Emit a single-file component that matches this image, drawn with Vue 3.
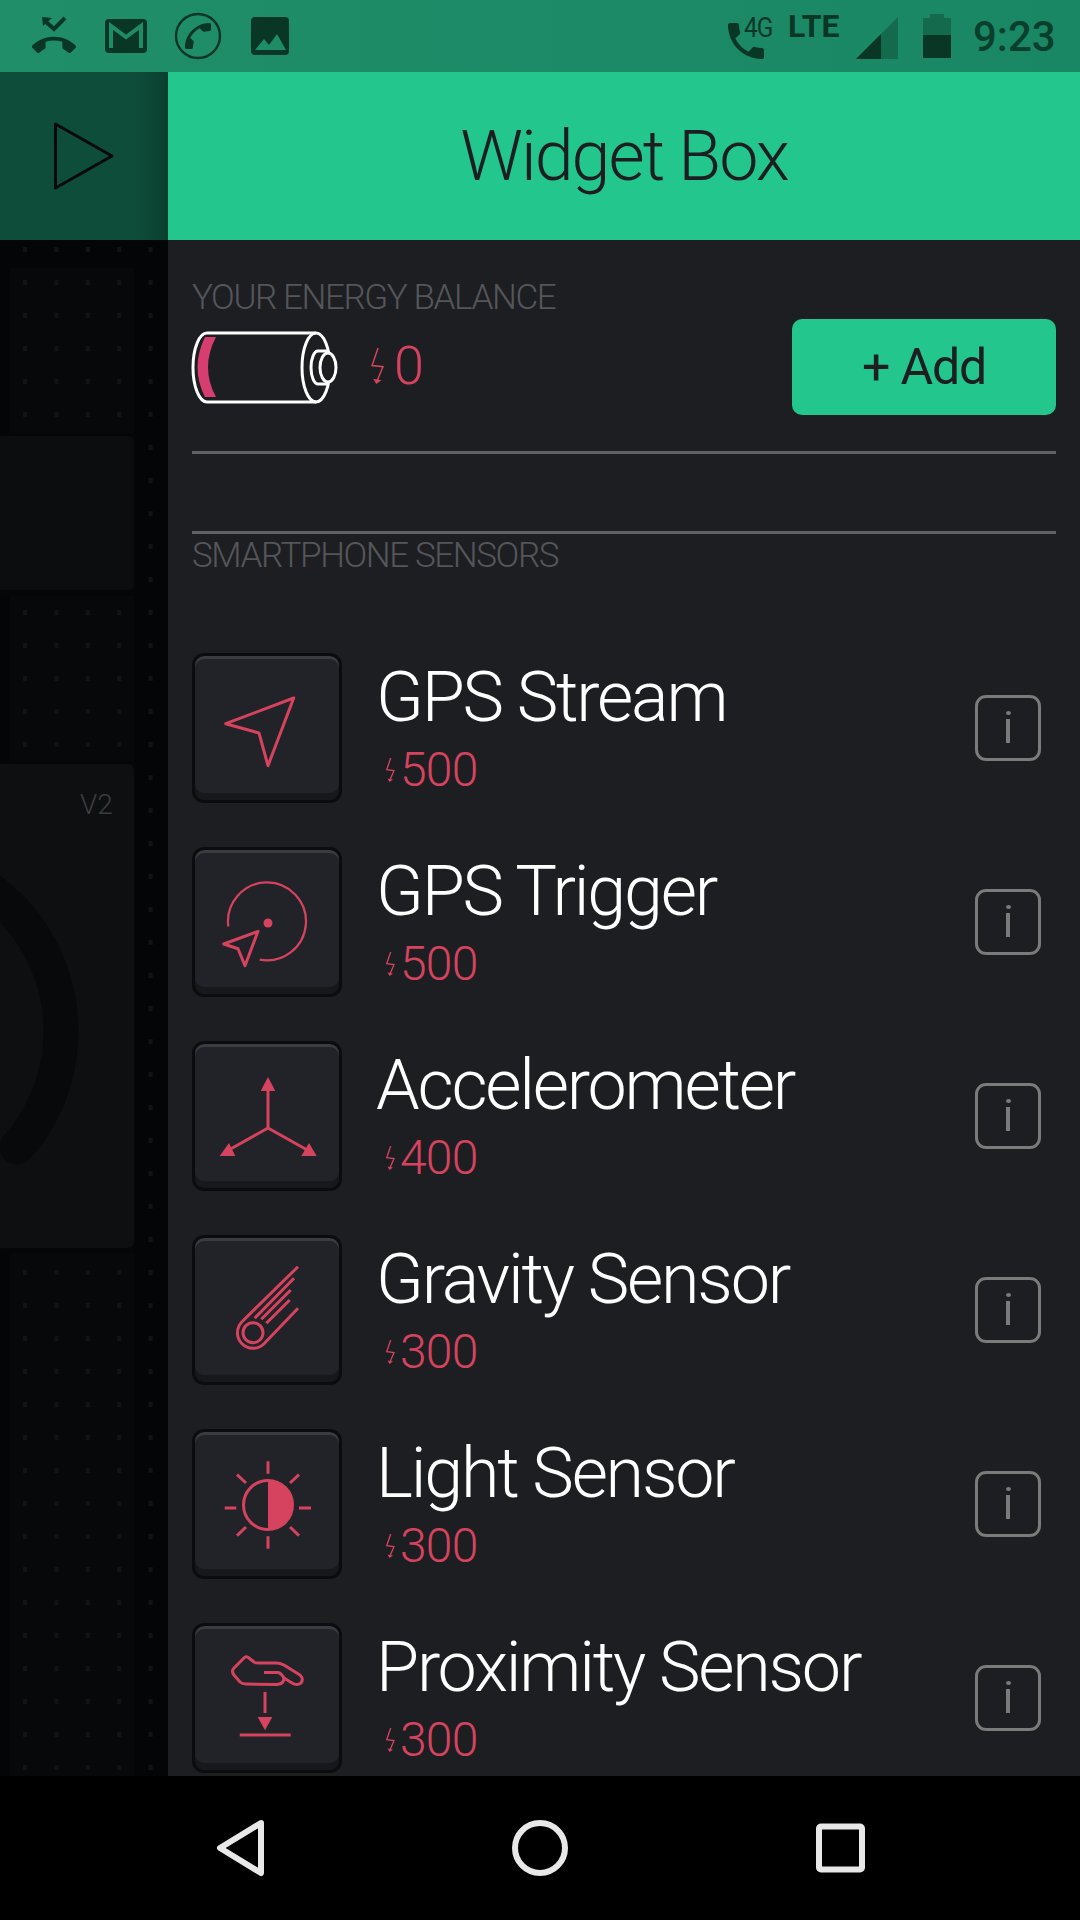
<template>
  <div class="screen">
    <div class="status-bar">
      <div class="status-left">
        <svg class="st-call-end" width="44" height="40" viewBox="0 0 44 40">
          <path d="M10 3l10 1-9 8z" />
          <path d="M14 8l8 7 11-11" fill="none" stroke="#0a3626" stroke-width="4" />
          <g transform="translate(0,10) scale(1.83)">
            <path d="M12 9c-1.6 0-3.15.25-4.6.72v3.1c0 .39-.23.74-.56.9-.98.49-1.87 1.12-2.66 1.85-.18.18-.43.28-.7.28-.28 0-.53-.11-.71-.29L.29 13.08c-.18-.17-.29-.42-.29-.7 0-.28.11-.53.29-.71C3.34 8.78 7.46 7 12 7s8.66 1.78 11.71 4.67c.18.18.29.43.29.71 0 .28-.11.53-.29.71l-2.48 2.48c-.18.18-.43.29-.71.29-.27 0-.52-.11-.7-.28-.79-.74-1.69-1.36-2.67-1.85-.33-.16-.56-.5-.56-.9v-3.1C15.15 9.25 13.6 9 12 9z" />
          </g>
        </svg>
        <svg class="st-gmail" width="42" height="34" viewBox="0 0 42 34">
          <rect width="42" height="34" rx="4" />
          <path d="M6 29V7l15 11L36 7v22" fill="none" stroke="#1e8c67" stroke-width="4" />
        </svg>
        <svg class="st-circle" width="48" height="48" viewBox="0 0 48 48">
          <circle cx="24" cy="24" r="22" fill="none" stroke="#0a3626" stroke-width="2.4" />
          <g transform="translate(24,24) rotate(90) scale(1.45) translate(-12,-12)">
            <path :d="callPath" />
          </g>
        </svg>
        <svg class="st-image" width="38" height="38" viewBox="0 0 38 38">
          <rect width="38" height="38" rx="4" />
          <path d="M4 33l9-11 5 6 8-11 9 16z" fill="#1e8c67" />
        </svg>
      </div>
      <div class="status-right">
        <div class="st-phone">
          <svg width="48" height="48" viewBox="0 0 24 24"><path :d="callPath" /></svg>
          <span class="st-4g">4G</span>
        </div>
        <span class="st-lte">LTE</span>
        <svg class="st-signal" width="42" height="42" viewBox="0 0 42 42">
          <path d="M42 0v42H0z" fill="#146a4c" />
          <path d="M25 17v25H0z" fill="#0a3626" />
        </svg>
        <svg class="st-battery" width="28" height="44" viewBox="0 0 28 44">
          <path d="M7 0h14v4h7v17H0V4h7z" fill="#146a4c" />
          <rect y="21" width="28" height="23" fill="#0a3626" />
        </svg>
        <span class="st-time">9:23</span>
      </div>
    </div>

    <div class="top-row">
      <div class="play-box">
        <svg width="64" height="72" viewBox="0 0 64 72">
          <path d="M3.500 4L60 36 3.500 68z" fill="none" stroke="#070a09" stroke-width="3" stroke-linejoin="round" />
        </svg>
      </div>
      <div class="title-box">Widget Box</div>
    </div>

    <div class="body-row">
      <svg class="canvas" width="168" height="1536" viewBox="0 0 168 1536">
        <defs>
          <pattern id="dots" x="23" y="40" width="31.400" height="33" patternUnits="userSpaceOnUse">
            <rect width="4" height="5" fill="#121316" />
          </pattern>
        </defs>
        <rect width="168" height="1536" fill="#040507" />
        <rect x="10" y="28" width="124" height="1508" fill="#07080a" />
        <rect width="168" height="1536" fill="url(#dots)" />
        <rect x="-10" y="193" width="146" height="163" rx="6" fill="#050608" />
        <rect x="-10" y="196" width="144" height="154" rx="6" fill="#0c0d0f" />
        <rect x="-10" y="521" width="146" height="493" rx="6" fill="#050608" />
        <rect x="-10" y="524" width="144" height="484" rx="6" fill="#0e0f11" />
        <path d="M-115 616A175 175 0 0 1 17 907" fill="none" stroke="#08090b" stroke-width="35" stroke-linecap="round" />
        <text class="v2" x="80" y="574">V2</text>
      </svg>

      <div class="drawer">
        <div class="label balance-label">YOUR ENERGY BALANCE</div>
        <div class="balance-row">
          <svg class="battery" width="150" height="76" viewBox="0 0 150 76">
            <path d="M15 8H26Q10 38.500 26 68H15Q0 38.500 15 8z" fill="#d63e70" />
            <path d="M126 4H17A14 34.500 0 0 0 17 73H126" fill="none" stroke="#fff" stroke-width="3" />
            <ellipse cx="126" cy="38.500" rx="14" ry="34.500" fill="none" stroke="#fff" stroke-width="3" />
            <path d="M138 22H128A7 16.500 0 0 0 128 55H138" fill="none" stroke="#fff" stroke-width="3" />
            <ellipse cx="138" cy="38.500" rx="8" ry="14.500" fill="#1d1e22" stroke="#fff" stroke-width="3" />
          </svg>
          <svg class="bolt-big" width="15" height="36" viewBox="0 0 10 24">
            <path d="M4.700 0L.7 11.700 8 12.500 4 22" fill="none" stroke="#d5435f" stroke-width="1" />
            <path d="M1.500 20.500L7 21.500 3.500 24z" fill="#d5435f" />
          </svg>
          <span class="balance-value">0</span>
          <button class="add-btn">+ Add</button>
        </div>
        <div class="divider first"></div>
        <div class="divider second"></div>
        <div class="label sensors-label">SMARTPHONE SENSORS</div>

        <div class="widgets">
          <div v-for="w in widgets" :key="w.name" class="widget">
            <div class="tile">
              <svg width="150" height="150" viewBox="0 0 150 150">
                <g v-if="w.icon === 'stream'" class="ico">
                  <path d="M101.700 45L33.700 70.700 67 80 76 112.700z" />
                </g>
                <g v-else-if="w.icon === 'trigger'" class="ico">
                  <path class="thin" d="M36.300 79.300A39 39 0 1 1 67.700 112.700" />
                  <circle class="solid" cx="76" cy="76" r="4.500" />
                  <path d="M66 84.300L31.700 97 46 101.700 53 118.700z" />
                </g>
                <g v-else-if="w.icon === 'accel'" class="ico">
                  <path d="M76 87V49M76 87L35 110M76 87L117 110" />
                  <path class="solid" d="M76 36L68.700 50H83.300zM37 102L27.700 115H43.300zM117 102L109.300 115H124.700z" />
                </g>
                <g v-else-if="w.icon === 'gravity'" class="ico">
                  <path d="M106 31.700L50 86.700A15.500 15.500 0 1 0 72 108.700L106 73.300" />
                  <circle cx="61" cy="97.700" r="10" />
                  <path d="M102 43.300L62.700 83.300M98.700 55L69.300 84.300M97.700 65L74.300 88.300" />
                </g>
                <g v-else-if="w.icon === 'light'" class="ico">
                  <circle cx="76" cy="76" r="24.500" />
                  <path class="solid" d="M76 51a25 25 0 0 1 0 50z" />
                  <path d="M76 32.300V44.700M76 107.300V119.700M32.700 79H44.300M107 79H119M45 45.700L54 54M107 45.700L98 54M45 106.700L54 98M107 106.700L98 98" />
                </g>
                <g v-else-if="w.icon === 'proximity'" class="ico">
                  <path d="M53 34Q55 33 57 35L62 39Q63 40 66 40L84 40Q88 40 92 42L108 52Q112 56 109 60Q105 63 100 60L92 55Q92 61 85 61.500L54 61Q50 61 48 59L42 52Q39 48 42 45z" />
                  <path d="M72 49.500L86 49.500Q89 50 92 55" />
                  <path d="M73 69V90M47.700 112H98.700" />
                  <path class="solid" d="M65.700 94H80.300L73 107.300z" />
                </g>
              </svg>
            </div>
            <div class="widget-text">
              <div class="widget-name">{{ w.name }}</div>
              <div class="widget-cost">
                <svg width="10" height="24" viewBox="0 0 10 24">
                  <path d="M4.700 0L.7 11.700 8 12.500 4 22" fill="none" stroke="#d5435f" stroke-width="1.300" />
                  <path d="M1.500 20.500L7 21.500 3.500 24z" fill="#d5435f" />
                </svg>
                <span>{{ w.cost }}</span>
              </div>
            </div>
            <div class="info-btn">
              <span class="info-dot"></span>
              <span class="info-stem"></span>
            </div>
          </div>
        </div>
      </div>
    </div>

    <div class="nav-bar">
      <svg width="60" height="68" viewBox="0 0 60 68">
        <path d="M51 9L10 34 51 59z" />
      </svg>
      <svg width="60" height="60" viewBox="0 0 60 60">
        <circle cx="30" cy="30" r="25" />
      </svg>
      <svg class="nav-square" width="52" height="52" viewBox="0 0 52 52">
        <rect x="3" y="4.500" width="43" height="43" rx="2" />
      </svg>
    </div>
  </div>
</template>

<script setup>
const callPath =
  'M6.62 10.79c1.44 2.83 3.76 5.14 6.59 6.59l2.2-2.2c.27-.27.67-.36 1.02-.24 1.12.37 2.33.57 3.57.57.55 0 1 .45 1 1V20c0 .55-.45 1-1 1-9.39 0-17-7.61-17-17 0-.55.45-1 1-1h3.5c.55 0 1 .45 1 1 0 1.25.2 2.45.57 3.57.11.35.03.74-.25 1.02l-2.2 2.2z'

const widgets = [
  { name: 'GPS Stream', cost: 500, icon: 'stream' },
  { name: 'GPS Trigger', cost: 500, icon: 'trigger' },
  { name: 'Accelerometer', cost: 400, icon: 'accel' },
  { name: 'Gravity Sensor', cost: 300, icon: 'gravity' },
  { name: 'Light Sensor', cost: 300, icon: 'light' },
  { name: 'Proximity Sensor', cost: 300, icon: 'proximity' }
]
</script>

<style>
html,
body {
  margin: 0;
  background: #000;
}
</style>

<style scoped>
.screen {
  width: 1080px;
  height: 1920px;
  display: flex;
  flex-direction: column;
  overflow: hidden;
  font-family: Roboto, "Liberation Sans", sans-serif;
  font-weight: 300;
}

.status-bar {
  height: 72px;
  flex: none;
  display: flex;
  justify-content: space-between;
  background: linear-gradient(90deg, #1f8e69, #198763);
}

.status-bar svg {
  fill: #0a3626;
  display: block;
}

.status-left {
  position: relative;
  width: 300px;
}

.status-left svg {
  position: absolute;
}

.st-call-end { left: 32px; top: 14px; }
.st-gmail { left: 105px; top: 19px; }
.st-circle { left: 174px; top: 12px; }
.st-image { left: 251px; top: 17px; }

.status-right {
  position: relative;
  width: 400px;
}

.status-right > * {
  position: absolute;
}

.st-phone { left: 42px; top: 17px; width: 60px; height: 48px; }
.st-4g {
  position: absolute;
  left: 22px;
  top: -4px;
  font-size: 27px;
  line-height: 30px;
  color: #0a3626;
  font-weight: 400;
  letter-spacing: -1px;
  transform: scaleX(0.9);
  transform-origin: left;
}
.st-lte {
  left: 108px;
  top: 10px;
  font-size: 32px;
  line-height: 32px;
  font-weight: 700;
  color: #0a3626;
}
.st-signal { left: 176px; top: 17px; }
.st-battery { left: 243px; top: 14px; }
.st-time {
  left: 293px;
  top: 13px;
  font-size: 42px;
  line-height: 48px;
  font-weight: 500;
  color: #0a3f2d;
}

.top-row {
  height: 168px;
  flex: none;
  display: flex;
}

.play-box {
  width: 168px;
  flex: none;
  background: linear-gradient(90deg, #0d4d39, #0d4d39 80%, #0b3f2f);
  display: flex;
  align-items: center;
  padding: 0 0 0 52px;
  box-sizing: border-box;
}

.title-box {
  flex: 1;
  background: #23c78e;
  color: #1d1e22;
  font-size: 70px;
  line-height: 168px;
  letter-spacing: -2px;
  text-align: center;
}

.body-row {
  flex: 1;
  display: flex;
  min-height: 0;
}

.canvas {
  flex: none;
  display: block;
}

.v2 {
  font-family: Roboto, sans-serif;
  font-size: 28px;
  fill: #3c3d40;
}

.drawer {
  flex: 1;
  background: #1d1e22;
  padding: 38px 24px 0;
  overflow: hidden;
  min-width: 0;
}

.label {
  font-size: 35px;
  line-height: 40px;
  letter-spacing: -1.400px;
  color: #55565a;
}

.balance-row {
  position: relative;
  display: flex;
  align-items: center;
  height: 96px;
  margin-top: 1px;
}

.battery {
  margin-left: -2px;
  margin-top: -1px;
}

.bolt-big {
  margin-left: 31px;
  margin-top: -3px;
}

.balance-value {
  margin-left: 8px;
  margin-top: -3px;
  font-size: 54px;
  line-height: 60px;
  color: #d5435f;
}

.add-btn {
  margin-left: auto;
  width: 264px;
  height: 96px;
  border: none;
  border-radius: 10px;
  background: #23c78e;
  color: #1d1e22;
  font-family: inherit;
  font-weight: 400;
  font-size: 50px;
  letter-spacing: -1.200px;
  padding: 0;
}

.divider {
  height: 3px;
  background: #5f6064;
}

.divider.first {
  margin-top: 36px;
}

.divider.second {
  margin-top: 77px;
}

.sensors-label {
  margin-top: 2px;
}

.widgets {
  margin-top: 77px;
  display: flex;
  flex-direction: column;
  gap: 44px;
}

.widget {
  display: flex;
  align-items: center;
  height: 150px;
}

.tile {
  width: 150px;
  height: 150px;
  flex: none;
  box-sizing: border-box;
  border: 3px solid #0b0c0e;
  border-radius: 12px;
  background: #222328;
  box-shadow: inset 0 3px 0 #3b3c41, inset 0 -7px 0 #17181b;
}

.tile svg {
  display: block;
  margin: -3px;
}

.ico {
  fill: none;
  stroke: #d5435f;
  stroke-width: 3;
  stroke-linejoin: round;
}

.ico .thin {
  stroke-width: 2.200;
}

.ico .solid {
  fill: #d5435f;
  stroke: none;
}

.widget-text {
  flex: 1;
  margin-left: 34px;
  min-width: 0;
}

.widget-name {
  font-size: 70px;
  line-height: 84px;
  letter-spacing: -2.200px;
  color: #fff;
  margin-top: -3px;
  white-space: nowrap;
}

.widget-cost {
  display: flex;
  align-items: center;
  color: #d5435f;
  font-size: 48px;
  line-height: 56px;
  letter-spacing: -0.800px;
  margin: 3px 0 0 10px;
}

.widget-cost svg {
  margin-right: 4px;
}

.info-btn {
  width: 66px;
  height: 66px;
  flex: none;
  box-sizing: border-box;
  border: 3.500px solid #7b7b7b;
  border-radius: 11px;
  margin-right: 15px;
  display: flex;
  flex-direction: column;
  align-items: center;
}

.info-dot {
  width: 5px;
  height: 4px;
  border-radius: 50%;
  background: #7b7b7b;
  margin-top: 13px;
}

.info-stem {
  width: 4px;
  height: 24px;
  background: #7b7b7b;
  margin-top: 4px;
}

.nav-bar {
  height: 144px;
  flex: none;
  background: #000;
  position: relative;
  display: flex;
  align-items: center;
  padding-left: 210px;
  gap: 240px;
}

.nav-bar svg {
  fill: none;
  stroke: #e8e8e8;
  stroke-width: 6;
  stroke-linejoin: round;
  display: block;
}

.nav-bar .nav-square {
  margin-left: 6px;
}
</style>
